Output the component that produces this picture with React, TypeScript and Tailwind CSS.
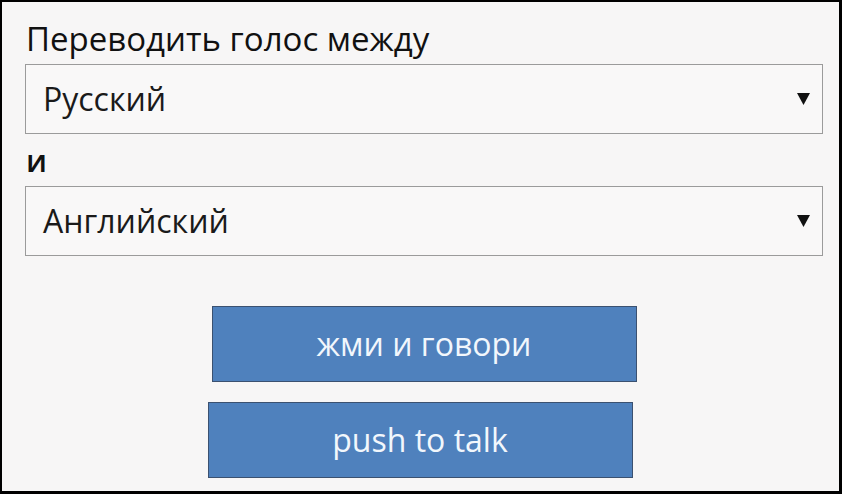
import React from "react";

const Arrow = () => (
  <svg width="13" height="12" viewBox="0 0 13 12" className="shrink-0">
    <polygon points="0,0 13,0 6.5,12" fill="#111" />
  </svg>
);

const Select = ({ label }: { label: string }) => (
  <div className="h-[70px] border border-[#9b9b9b] bg-[#f9f8f8] flex items-center justify-between pl-[17px] pr-[12px]">
    <span className="text-[32px] leading-[32px] text-[#1a1a1a]">{label}</span>
    <Arrow />
  </div>
);

export default function App() {
  return (
    <div
      className="w-[842px] h-[494px] box-border border-black border-t-2 border-l-2 border-r-[3px] border-b-[3px] bg-[#f7f6f6] pl-[23px] pr-[16px] flex flex-col"
      style={{ fontFamily: '"Open Sans", "Noto Sans", sans-serif' }}
    >
      <div className="mt-[20px] pl-[1px] text-[33px] leading-[33px] text-[#111]">Переводить голос между</div>
      <div className="mt-[9px]">
        <Select label="Русский" />
      </div>
      <div className="h-[52px] flex items-center pl-[1px] text-[31px] leading-[31px] text-[#111] font-semibold">и</div>
      <Select label="Английский" />
      <div className="flex flex-col items-center mt-[50px] gap-[20px]">
        <button className="w-[425px] h-[76px] bg-[#4f81bd] border border-[#3b5170] text-[#f2f7fc] text-[32px] leading-[32px] font-medium flex items-center justify-center">
          жми и говори
        </button>
        <button className="w-[425px] h-[76px] mr-[8px] bg-[#4f81bd] border border-[#3b5170] text-[#f2f7fc] text-[32px] leading-[32px] font-medium flex items-center justify-center">
          push to talk
        </button>
      </div>
    </div>
  );
}
